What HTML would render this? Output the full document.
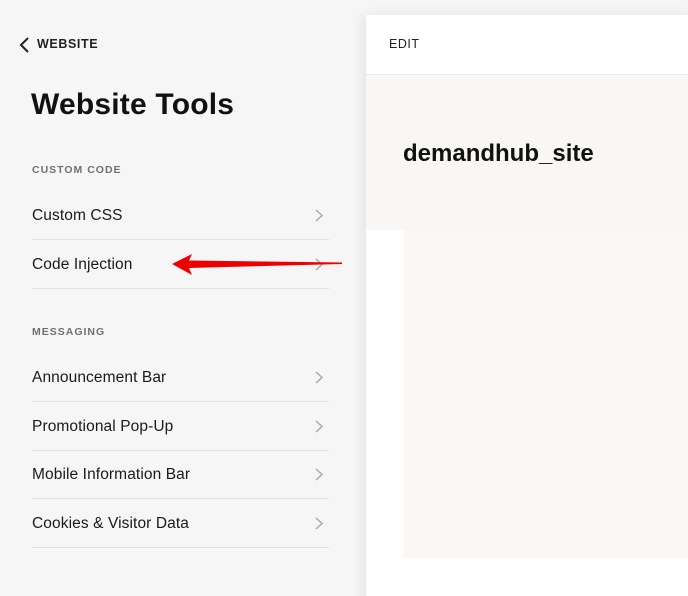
<!DOCTYPE html>
<html><head><style>
html,body{margin:0;width:688px;height:596px;overflow:hidden}
body{background:#f6f6f6;position:relative;font-family:"Liberation Sans",sans-serif;color:#1a1a1a}
.a{position:absolute}
.row{position:absolute;left:32px;width:297px;height:48px;border-bottom:1px solid #e2e2e2;font-size:15.5px;line-height:50px;color:#1a1a1a;letter-spacing:.1px}
.row svg{position:absolute;right:6px;top:18px}
.lab{position:absolute;left:32px;font-size:10.5px;letter-spacing:1px;color:#707070;font-weight:bold}
</style></head><body>
<svg class="a" style="left:18px;top:36px" width="14" height="18" viewBox="0 0 14 18"><path d="M10 2 L3 9 L10 16" fill="none" stroke="#222" stroke-width="2"/></svg>
<div class="a" style="left:37px;top:37px;font-size:12.5px;font-weight:bold;letter-spacing:.6px;color:#222">WEBSITE</div>
<div class="a" style="left:31px;top:88px;font-size:30px;font-weight:bold;color:#111;letter-spacing:.2px">Website Tools</div>
<div class="lab" style="top:164px">CUSTOM CODE</div>
<div class="row" style="top:191px">Custom CSS<svg width="8" height="13"><path d="M1 1 L7 6.5 L1 12" fill="none" stroke="#aaa" stroke-width="1.5"/></svg></div>
<div class="row" style="top:240px">Code Injection<svg width="8" height="13"><path d="M1 1 L7 6.5 L1 12" fill="none" stroke="#aaa" stroke-width="1.5"/></svg></div>
<div class="lab" style="top:326px">MESSAGING</div>
<div class="row" style="top:353px">Announcement Bar<svg width="8" height="13"><path d="M1 1 L7 6.5 L1 12" fill="none" stroke="#aaa" stroke-width="1.5"/></svg></div>
<div class="row" style="top:402px">Promotional Pop-Up<svg width="8" height="13"><path d="M1 1 L7 6.5 L1 12" fill="none" stroke="#aaa" stroke-width="1.5"/></svg></div>
<div class="row" style="top:450px">Mobile Information Bar<svg width="8" height="13"><path d="M1 1 L7 6.5 L1 12" fill="none" stroke="#aaa" stroke-width="1.5"/></svg></div>
<div class="row" style="top:499px">Cookies &amp; Visitor Data<svg width="8" height="13"><path d="M1 1 L7 6.5 L1 12" fill="none" stroke="#aaa" stroke-width="1.5"/></svg></div>
<svg class="a" style="left:0;top:0" width="688" height="596"><path d="M172 264 L192 254 L189 260.5 L342 262.5 L342 264 L189 268 L192 275 Z" fill="#ee0000"/></svg>
<div class="a" style="left:366px;top:15px;width:330px;height:600px;background:#fff;box-shadow:-4px 0 12px rgba(0,0,0,.07)">
<div class="a" style="left:23px;top:22px;font-size:12.5px;letter-spacing:.5px;color:#222">EDIT</div>
<div class="a" style="left:0;top:59px;width:330px;height:1px;background:#ececec"></div>
<div class="a" style="left:0;top:60px;width:330px;height:155px;background:#f8f7f4"></div>
<div class="a" style="left:37px;top:215px;width:300px;height:328px;background:#faf7f5"></div>
<div class="a" style="left:37px;top:125px;font-size:24px;font-weight:bold;color:#111">demandhub_site</div>
</div>
</body></html>
